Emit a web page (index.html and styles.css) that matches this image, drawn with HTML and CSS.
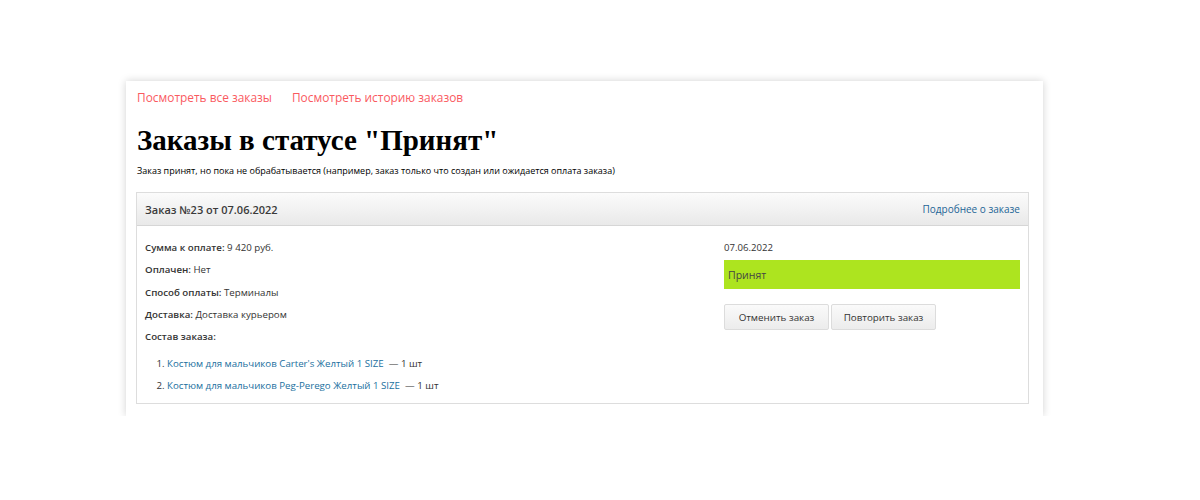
FILE: index.html
```html
<!DOCTYPE html>
<html lang="ru">
<head>
<meta charset="utf-8">
<title>Заказы</title>
<link rel="stylesheet" href="styles.css">
</head>
<body>
<div class="page">
  <div class="top-links">
    <a href="#" class="top-link">Посмотреть все заказы</a>
    <a href="#" class="top-link">Посмотреть историю заказов</a>
  </div>
  <h1 class="title">Заказы в статусе "Принят"</h1>
  <p class="desc">Заказ принят, но пока не обрабатывается (например, заказ только что создан или ожидается оплата заказа)</p>
  <div class="order">
    <div class="order-head">
      <span class="order-name">Заказ №23 от 07.06.2022</span>
      <a href="#" class="order-more">Подробнее о заказе</a>
    </div>
    <div class="order-body">
      <div class="order-info">
        <div class="row"><b>Сумма к оплате:</b> 9 420 руб.</div>
        <div class="row"><b>Оплачен:</b> Нет</div>
        <div class="row"><b>Способ оплаты:</b> Терминалы</div>
        <div class="row"><b>Доставка:</b> Доставка курьером</div>
        <div class="row"><b>Состав заказа:</b></div>
        <ol class="items">
          <li><a href="#">Костюм для мальчиков Carter's Желтый 1 SIZE</a> &nbsp;— 1 шт</li>
          <li><a href="#">Костюм для мальчиков Peg-Perego Желтый 1 SIZE</a> &nbsp;— 1 шт</li>
        </ol>
      </div>
      <div class="order-side">
        <div class="date">07.06.2022</div>
        <div class="status">Принят</div>
        <div class="actions">
          <button class="btn">Отменить заказ</button>
          <button class="btn">Повторить заказ</button>
        </div>
      </div>
    </div>
  </div>
</div>
</body>
</html>
```
FILE: styles.css
```css
html, body {
  margin: 0;
  padding: 0;
  background: #fff;
}
body {
  padding: 81px 0 0 126px;
  font-family: "Open Sans", "Noto Sans", sans-serif;
  color: #333;
}
.page {
  width: 893px;
  padding: 7px 14px 12px 10px;
  background: #fff;
  box-shadow: 0 0 8px rgba(0, 0, 0, 0.18);
}
.top-links {
  display: flex;
  gap: 20px;
  padding-left: 1px;
}
.top-link {
  color: #fa5a5f;
  font-size: 11.9px;
  text-decoration: none;
  line-height: 18px;
}
.title {
  font-family: "Liberation Serif", serif;
  font-size: 29px;
  font-weight: bold;
  color: #000;
  margin: 16px 0 0 1px;
  line-height: 37px;
}
.desc {
  font-size: 9px;
  color: #000;
  margin: 5px 0 14px 1px;
  line-height: 14px;
}
.order {
  border: 1px solid #ddd;
}
.order-head {
  height: 32px;
  display: flex;
  align-items: center;
  justify-content: space-between;
  padding: 0 8px;
  background: linear-gradient(#fbfbfb, #e9e9e9);
  border-bottom: 1px solid #d6d6d6;
}
.order-name {
  font-size: 11px;
  font-weight: 600;
  color: #3a3a3a;
}
.order-more {
  font-size: 10px;
  color: #1d6596;
  text-decoration: none;
}
.order-body {
  display: flex;
  justify-content: space-between;
  padding: 15px 8px 1px 8px;
}
.order-info {
  font-size: 9.7px;
  color: #333;
}
.row {
  line-height: 14px;
  margin-bottom: 8.3px;
}
.row b {
  font-weight: 600;
}
.items {
  margin: 13px 0 0 0;
  padding-left: 22px;
}
.items li {
  line-height: 14px;
  margin-bottom: 8.3px;
}
.items a {
  color: #1a6f9e;
  text-decoration: none;
}
.order-side {
  width: 296px;
  font-size: 9.6px;
}
.date {
  line-height: 14px;
  color: #333;
}
.status {
  margin-top: 5px;
  height: 29px;
  background: #ade41f;
  display: flex;
  align-items: center;
  padding-left: 4px;
  font-size: 10.5px;
  color: #444;
}
.actions {
  display: flex;
  gap: 2px;
  margin-top: 15px;
}
.btn {
  width: 105px;
  height: 26px;
  border: 1px solid #dcdcdc;
  border-radius: 2px;
  background: linear-gradient(#fafafa, #ececec);
  font-family: "Open Sans", "Noto Sans", sans-serif;
  font-size: 9.8px;
  color: #333;
  padding: 0;
}
```
